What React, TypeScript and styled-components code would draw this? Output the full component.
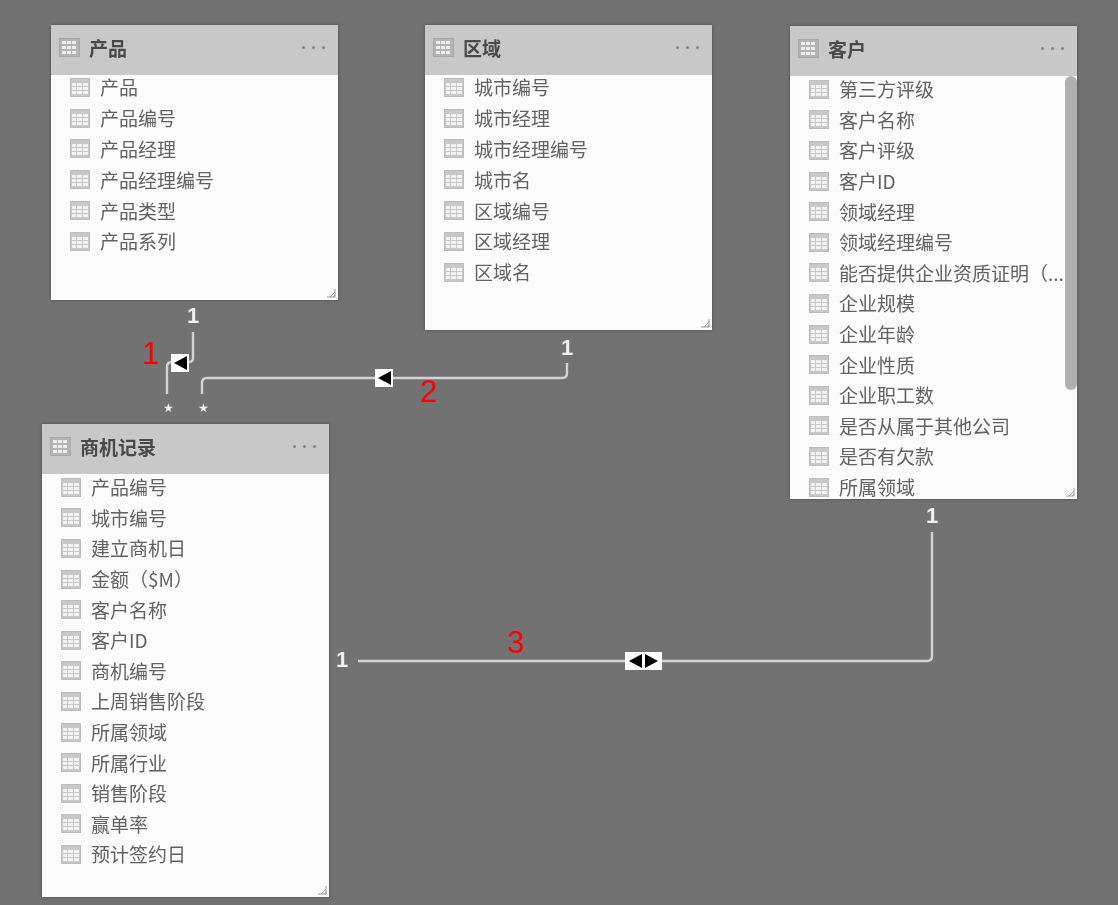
import React from 'react';
import styled, { createGlobalStyle } from 'styled-components';

const GlobalStyle = createGlobalStyle`
  html, body {
    margin: 0;
    padding: 0;
    background: #727272;
  }
`;

const Canvas = styled.div`
  position: relative;
  width: 1118px;
  height: 905px;
  overflow: hidden;
  background: #727272;
  font-family: "Noto Sans CJK SC", "Liberation Sans", sans-serif;
  filter: blur(0.5px);
`;

const Card = styled.section<{ $x: number; $y: number; $w: number; $h: number }>`
  position: absolute;
  left: ${(p) => p.$x}px;
  top: ${(p) => p.$y}px;
  width: ${(p) => p.$w}px;
  height: ${(p) => p.$h}px;
  display: flex;
  flex-direction: column;
  background: #fbfbfb;
  box-shadow: 0 0 3px rgba(60, 60, 60, 0.7);
  overflow: hidden;
`;

const CardHeader = styled.header`
  flex: 0 0 50px;
  box-sizing: border-box;
  display: flex;
  align-items: center;
  padding: 0 13px 5px 8px;
  gap: 9px;
  background: #c8c8c8;
`;

const CardTitle = styled.h2`
  flex: 1;
  margin: 0;
  font-size: 19px;
  font-weight: 700;
  color: #4a4a4a;
  line-height: 24px;
`;

const Dots = styled.div`
  display: flex;
  gap: 7px;
`;

const Dot = styled.span`
  width: 3px;
  height: 3px;
  border-radius: 50%;
  background: #858585;
`;

const FieldList = styled.ul<{ $pitch: number; $offset: number }>`
  list-style: none;
  margin: ${(p) => p.$offset}px 0 0;
  padding: 0 0 0 19px;
  display: grid;
  grid-auto-rows: ${(p) => p.$pitch}px;
  flex: 1;
  align-content: start;
`;

const Field = styled.li`
  display: flex;
  align-items: center;
  gap: 10px;
  height: 100%;
  min-width: 0;
  font-size: 19px;
  line-height: 24px;
  color: #626262;
  white-space: nowrap;
`;

const Grip = styled.svg`
  position: absolute;
  right: 2px;
  bottom: 2px;
  width: 10px;
  height: 10px;
`;

const Scrollbar = styled.div<{ $h: number }>`
  position: absolute;
  top: 50px;
  right: 0;
  width: 12px;
  height: ${(p) => p.$h}px;
  border-radius: 6px;
  background: #b0b0b0;
`;

const Overlay = styled.svg`
  position: absolute;
  inset: 0;
  width: 1118px;
  height: 905px;
`;

const Label = styled.span<{ $x: number; $y: number; $star?: boolean }>`
  position: absolute;
  left: ${(p) => p.$x}px;
  top: ${(p) => p.$y}px;
  font-family: ${(p) => (p.$star ? '"DejaVu Sans"' : '"Liberation Sans"')}, sans-serif;
  font-size: ${(p) => (p.$star ? 12 : 22)}px;
  font-weight: 700;
  line-height: 20px;
  color: #f0f0f0;
`;

const Callout = styled.span<{ $x: number; $y: number }>`
  position: absolute;
  left: ${(p) => p.$x}px;
  top: ${(p) => p.$y}px;
  font-family: "Liberation Sans", sans-serif;
  font-size: 31px;
  line-height: 30px;
  color: #ff0000;
`;

const Marker = styled.div<{ $x: number; $y: number; $w: number }>`
  position: absolute;
  left: ${(p) => p.$x}px;
  top: ${(p) => p.$y}px;
  width: ${(p) => p.$w}px;
  height: 18px;
  display: flex;
  align-items: center;
  justify-content: center;
  gap: 3px;
  background: #fff;
`;

const Arrow = styled.span<{ $dir: 'left' | 'right' }>`
  width: 0;
  height: 0;
  border-top: 7px solid transparent;
  border-bottom: 7px solid transparent;
  ${(p) =>
    p.$dir === 'left'
      ? 'border-right: 13px solid #000;'
      : 'border-left: 13px solid #000;'}
`;

const TitleIcon = () => (
  <svg width="21" height="19" viewBox="0 0 21 19" style={{ flex: 'none' }}>
    <rect x="0.5" y="0.5" width="20" height="18" fill="#b4b4b4" stroke="#a8a8a8" />
    {[3, 8, 13].map((y) =>
      [3, 8, 13].map((x) => <rect key={`${x}-${y}`} x={x} y={y} width="4" height="3" fill="#eee" />)
    )}
  </svg>
);

const FieldIcon = () => (
  <svg width="20" height="19" viewBox="0 0 20 19" style={{ flex: 'none' }}>
    <rect x="0.5" y="0.5" width="19" height="18" fill="#c8c8c8" stroke="#bcbcbc" />
    <rect x="2" y="5" width="4" height="3" fill="#f2f2f2" />
    <rect x="7" y="5" width="5" height="3" fill="#f2f2f2" />
    <rect x="13" y="5" width="5" height="3" fill="#f2f2f2" />
    <rect x="2" y="9" width="4" height="3" fill="#f2f2f2" />
    <rect x="7" y="9" width="5" height="3" fill="#f2f2f2" />
    <rect x="13" y="9" width="5" height="3" fill="#f2f2f2" />
    <rect x="2" y="13" width="4" height="3" fill="#f2f2f2" />
    <rect x="7" y="13" width="5" height="3" fill="#f2f2f2" />
    <rect x="13" y="13" width="5" height="3" fill="#f2f2f2" />
  </svg>
);

type TableProps = {
  title: string;
  fields: string[];
  x: number;
  y: number;
  w: number;
  h: number;
  pitch: number;
  offset: number;
  scrollbar?: number;
};

const TableCard = ({ title, fields, x, y, w, h, pitch, offset, scrollbar }: TableProps) => (
  <Card $x={x} $y={y} $w={w} $h={h}>
    <CardHeader>
      <TitleIcon />
      <CardTitle>{title}</CardTitle>
      <Dots>
        <Dot />
        <Dot />
        <Dot />
      </Dots>
    </CardHeader>
    <FieldList $pitch={pitch} $offset={offset}>
      {fields.map((f) => (
        <Field key={f}>
          <FieldIcon />
          {f}
        </Field>
      ))}
    </FieldList>
    {scrollbar && <Scrollbar $h={scrollbar} />}
    <Grip viewBox="0 0 10 10">
      <path d="M9 1V9H1M9 4L4 9M9 7L7 9" fill="none" stroke="#9a9a9a" strokeWidth="1" />
    </Grip>
  </Card>
);

const products = ['产品', '产品编号', '产品经理', '产品经理编号', '产品类型', '产品系列'];
const regions = ['城市编号', '城市经理', '城市经理编号', '城市名', '区域编号', '区域经理', '区域名'];
const customers = [
  '第三方评级',
  '客户名称',
  '客户评级',
  '客户ID',
  '领域经理',
  '领域经理编号',
  '能否提供企业资质证明（...',
  '企业规模',
  '企业年龄',
  '企业性质',
  '企业职工数',
  '是否从属于其他公司',
  '是否有欠款',
  '所属领域',
];
const deals = [
  '产品编号',
  '城市编号',
  '建立商机日',
  '金额（$M）',
  '客户名称',
  '客户ID',
  '商机编号',
  '上周销售阶段',
  '所属领域',
  '所属行业',
  '销售阶段',
  '赢单率',
  '预计签约日',
];

const App: React.FC = () => (
  <>
    <GlobalStyle />
    <Canvas>
      <TableCard title="产品" fields={products} x={51} y={25} w={287} h={275} pitch={30.8} offset={-3} />
      <TableCard title="区域" fields={regions} x={425} y={25} w={287} h={305} pitch={30.8} offset={-3} />
      <TableCard title="客户" fields={customers} x={790} y={26} w={287} h={473} pitch={30.6} offset={-2} scrollbar={314} />
      <TableCard title="商机记录" fields={deals} x={42} y={424} w={287} h={473} pitch={30.6} offset={-2} />

      <Overlay viewBox="0 0 1118 905">
        <g fill="none" stroke="#d2d2d2" strokeWidth="2.4">
          <path d="M193 332V358Q193 362 189 362H172Q167 362 167 367V394" />
          <path d="M202 394V383Q202 378 207 378H562Q567 378 567 373V363" />
          <path d="M358 661H927Q932 661 932 656V532" />
        </g>
      </Overlay>

      <Label $x={187} $y={306}>1</Label>
      <Label $x={561} $y={338}>1</Label>
      <Label $x={926} $y={506}>1</Label>
      <Label $x={336} $y={650}>1</Label>
      <Label $x={163} $y={398} $star>★</Label>
      <Label $x={198} $y={398} $star>★</Label>

      <Marker $x={171} $y={354} $w={18}>
        <Arrow $dir="left" />
      </Marker>
      <Marker $x={375} $y={369} $w={18}>
        <Arrow $dir="left" />
      </Marker>
      <Marker $x={625} $y={652} $w={37}>
        <Arrow $dir="left" />
        <Arrow $dir="right" />
      </Marker>

      <Callout $x={142} $y={339}>1</Callout>
      <Callout $x={420} $y={377}>2</Callout>
      <Callout $x={507} $y={628}>3</Callout>
    </Canvas>
  </>
);

export default App;
